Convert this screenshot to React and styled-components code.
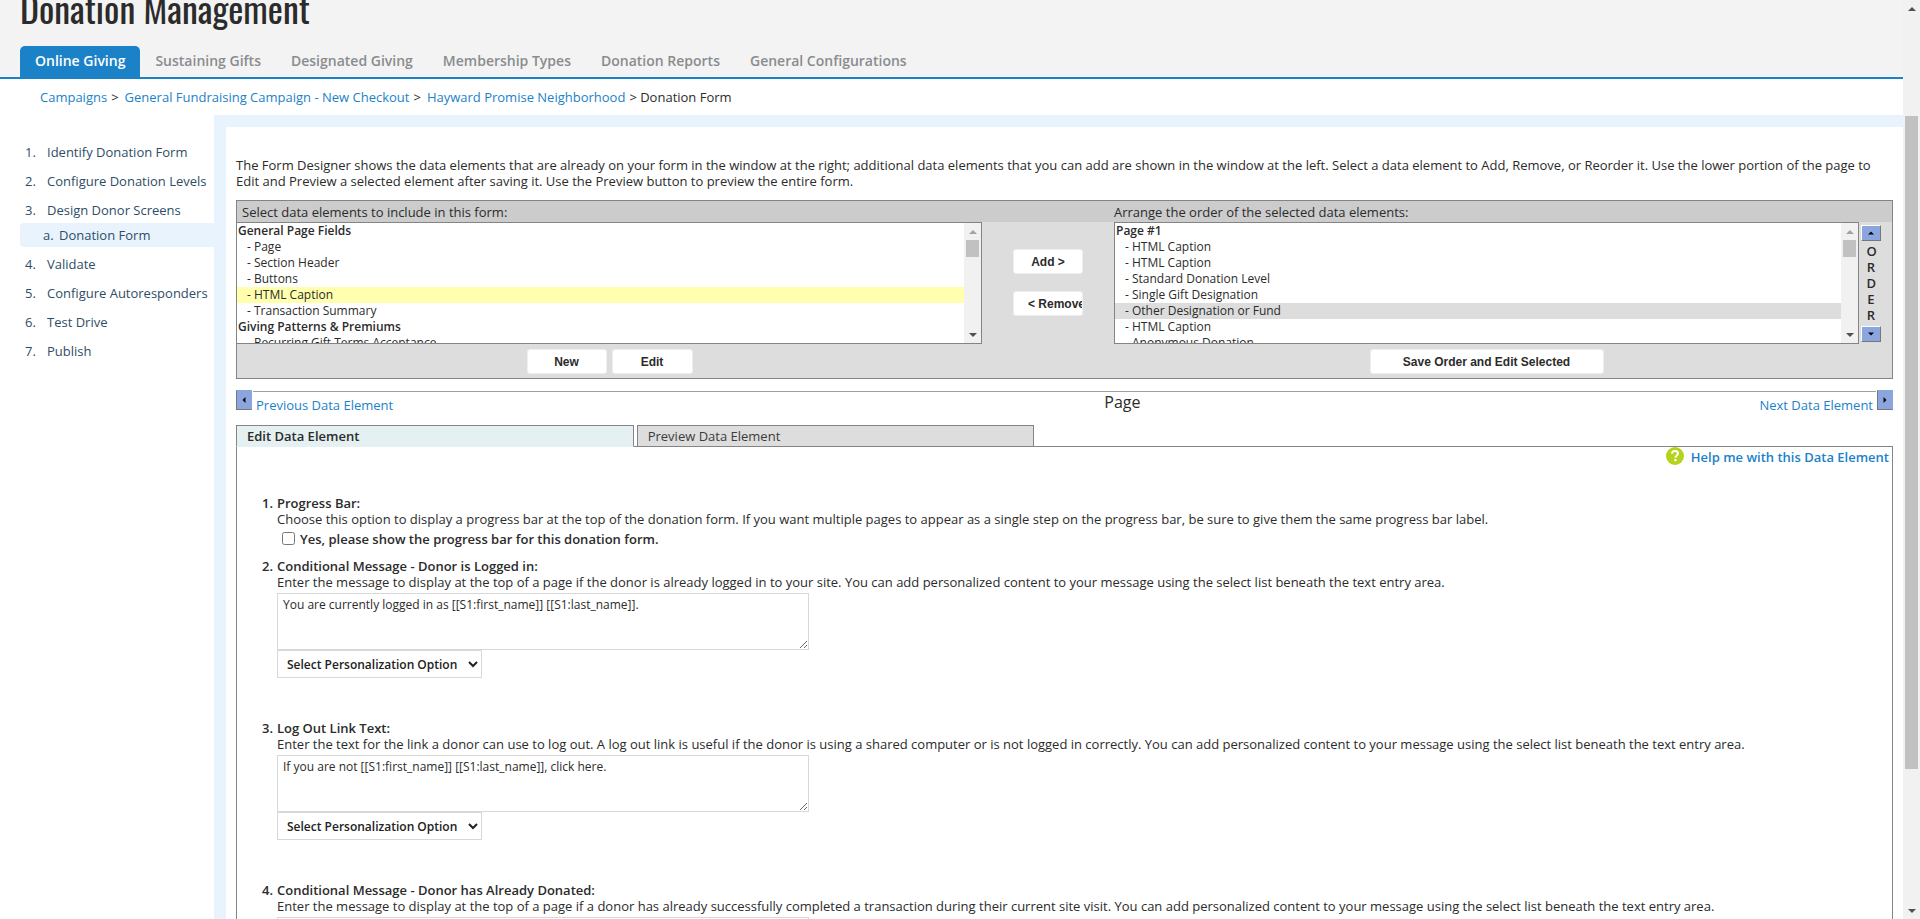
import React, { useState } from "react";
import styled, { createGlobalStyle, css } from "styled-components";

const blue = "#1c82c8";
const paleBlue = "#e8f3fd";
const ink = "#2b2b2b";
const line = "#848484";
const sans = `"Open Sans", "Noto Sans", sans-serif`;
const arial = `"Liberation Sans", Arial, sans-serif`;

const GlobalStyle = createGlobalStyle`
  * {
    box-sizing: border-box;
  }
  body {
    margin: 0;
    background: white;
    color: ${ink};
    font-family: ${sans};
    font-size: 13px;
    line-height: 16px;
  }
  a {
    color: ${blue};
    text-decoration: none;
  }
  ul, ol {
    list-style: none;
    margin: 0;
    padding: 0;
  }
`;

const Shell = styled.div`
  display: flex;
  height: 100vh;
  overflow: hidden;
`;

const Page = styled.div`
  flex: 1;
  min-width: 0;
  overflow: hidden;
`;

const Header = styled.header`
  background: #f3f3f3;
  border-bottom: 2px solid ${blue};
  padding: 0 20px;
`;

const PageTitle = styled.h1`
  margin: 0;
  padding-bottom: 30px;
  font-family: "Oswald", "Liberation Sans Narrow", ${arial};
  font-size: 36px;
  font-weight: 400;
  line-height: 16px;
`;

const MainTabs = styled.nav`
  display: flex;
`;

const MainTab = styled.a`
  padding: 0 15px 2px;
  border-radius: 5px 5px 0 0;
  font-size: 14px;
  font-weight: 600;
  line-height: 29px;
  color: #8a8c8e;
  ${({ $active }) =>
    $active &&
    css`
      background: ${blue};
      color: white;
    `}
`;

const Breadcrumb = styled.nav`
  display: flex;
  gap: 4px;
  padding: 10px 40px;

  a:not(:first-child) {
    margin-left: 2px;
  }
`;

const Columns = styled.div`
  display: flex;
  align-items: stretch;
`;

const Sidebar = styled.aside`
  flex: 0 0 214px;
  padding: 22px 0 0 20px;
`;

const Step = styled.a`
  display: flex;
  height: 29px;
  padding-left: 5px;
  align-items: center;
  color: #2f4d66;
  white-space: nowrap;

  span {
    width: 22px;
  }
  ${({ $sub }) =>
    $sub &&
    css`
      height: 24px;
      margin: -1px 0 2px;
      padding-left: 23px;
      border-radius: 4px 0 0 4px;
      background: ${paleBlue};
      span {
        width: 16px;
      }
    `}
`;

const Content = styled.main`
  flex: 1;
  min-width: 0;
  border: solid ${paleBlue};
  border-width: 12px 0 0 12px;
  padding: 30px 10px 0;
`;

const Intro = styled.p`
  margin: 0 0 11px;
`;

const Designer = styled.section`
  border: 1px solid ${line};
  background: #ddd;
`;

const DesignerGrid = styled.div`
  display: grid;
  grid-template-columns: 1fr 132px 1fr 33px;
`;

const DesignerHead = styled(DesignerGrid)`
  height: 21px;
  background: #ccc;
  line-height: 22px;
`;

const HeadLabel = styled.div`
  padding-left: ${({ $indent }) => ($indent ? "5px" : 0)};
`;

const ListFrame = styled.div`
  display: flex;
  height: 122px;
  border: 1px solid ${line};
  border-left-width: ${({ $flush }) => ($flush ? 0 : "1px")};
  background: white;
  overflow: hidden;
`;

const List = styled.ul`
  flex: 1;
  font-size: 12px;
`;

const ListItem = styled.li`
  padding-left: ${({ $group }) => ($group ? "1px" : "10px")};
  font-weight: ${({ $group }) => ($group ? 600 : 400)};
  background: ${({ $mark }) => $mark || "none"};
  cursor: pointer;
`;

const Track = styled.div`
  display: flex;
  flex-direction: column;
  flex: 0 0 17px;
  align-items: center;
  background: #f1f1f1;
`;

const TrackGap = styled.div`
  flex: ${({ $grow }) => $grow};
`;

const Thumb = styled.div`
  width: 13px;
  flex: ${({ $grow }) => $grow || "0 0 17px"};
  background: #c1c1c1;
`;

const Middle = styled.div`
  display: flex;
  flex-direction: column;
  align-items: center;
  gap: 17px;
  padding-top: 27px;
`;

const PushButton = styled.button`
  width: ${({ $width }) => $width};
  height: 25px;
  padding: 0 14px;
  border: 1px solid #eee;
  border-radius: 3px;
  background: white;
  color: ${ink};
  font: bold 12px ${arial};
  white-space: nowrap;
  overflow: hidden;
  cursor: pointer;
`;

const OrderColumn = styled.div`
  display: flex;
  flex-direction: column;
  align-items: center;
  width: 24px;
  padding: 3px 0 2px;
  font-weight: 600;
  text-align: center;

  span {
    margin: 2px 0 3px;
    width: 9px;
    word-break: break-all;
  }
`;

const ArrowButton = styled.button`
  display: flex;
  align-items: center;
  justify-content: center;
  flex: none;
  width: ${({ $tall }) => ($tall ? "16px" : "20px")};
  height: ${({ $tall }) => ($tall ? "20px" : "16px")};
  padding: 0;
  border: 1px solid;
  border-color: #fff #777 #777 #fff;
  background: #8ba6df;
  cursor: pointer;
  ${({ $tall }) =>
    $tall &&
    css`
      border-color: #8ba6df #8ba6df #777 #777;
    `}
`;

const DesignerFoot = styled(DesignerGrid)`
  padding: 5px 0 4px;
`;

const FootButtons = styled.div`
  display: flex;
  justify-content: center;
  gap: 5px;
`;

const Pager = styled.div`
  display: grid;
  grid-template-columns: 15fr auto 13fr;
  margin-top: 11px;
  height: 35px;
`;

const PagerSide = styled.div`
  display: flex;
  justify-content: ${({ $end }) => ($end ? "flex-end" : "flex-start")};
  gap: 4px;

  a {
    flex: 1;
    margin-top: 1px;
    padding-top: 5px;
    border-top: 1px solid #a0a0a0;
    text-align: ${({ $end }) => ($end ? "right" : "left")};
  }
  a:last-child {
    margin-left: -3px;
    padding-left: 3px;
  }
  a:first-child {
    margin-right: -3px;
    padding-right: 3px;
  }
`;

const PagerTitle = styled.h2`
  margin: 1px 0 0;
  border-top: 1px solid #a0a0a0;
  font-size: 16px;
  font-weight: 500;
  line-height: 20px;
`;

const ElementTabs = styled.div`
  display: flex;
  gap: 3px;
`;

const ElementTab = styled.button`
  flex: 0 0 24%;
  height: 22px;
  margin-bottom: -1px;
  padding: 0 10px;
  border: 1px solid ${line};
  background: #ddd;
  color: #3c3c3c;
  font: 400 13px ${sans};
  text-align: left;
  ${({ $active }) =>
    $active &&
    css`
      border-bottom-color: #e4f0f1;
      background: #e4f0f1;
      color: ${ink};
      font-weight: 600;
    `}
`;

const Panel = styled.section`
  border: 1px solid ${line};
  min-height: 500px;
`;

const HelpLink = styled.a`
  display: flex;
  justify-content: flex-end;
  gap: 7px;
  padding: 0 3px;
  font-weight: 600;
  line-height: 20px;
`;

const Fields = styled.ol`
  padding: 28px 40px 0 25px;
`;

const Field = styled.li`
  display: flex;
  margin-bottom: ${({ $tight }) => ($tight ? "11px" : "42px")};
`;

const FieldNumber = styled.span`
  width: 15px;
  font-weight: 600;
`;

const FieldBody = styled.div`
  flex: 1;
`;

const FieldTitle = styled.label`
  display: block;
  font-weight: 600;
`;

const CheckRow = styled.label`
  display: flex;
  align-items: center;
  gap: 5px;
  height: 20px;
  padding: 3px 0 0 5px;
  font-weight: 600;

  input {
    width: 13px;
    height: 13px;
    margin: 0;
  }
`;

const MessageBox = styled.textarea`
  display: block;
  width: 532px;
  height: 57px;
  margin-top: 3px;
  padding: 3px 5px;
  border: 1px solid #d8d8d8;
  color: ${ink};
  font: 12px/16px ${sans};
`;

const Personalize = styled.select`
  display: block;
  width: 205px;
  height: 28px;
  padding: 0 4px 0 5px;
  border: 1px solid #d8d8d8;
  background: white;
  color: #222;
  font: 600 12px ${sans};
`;

const Triangle = ({ dir, color = "#505050", size = 8 }) => {
  const points = {
    up: "0,6 4,2 8,6",
    down: "0,2 4,6 8,2",
    left: "6,0 2,4 6,8",
    right: "2,0 6,4 2,8"
  }[dir];
  return (
    <svg width={size} height={size} viewBox="0 0 8 8" aria-hidden="true">
      <polygon points={points} fill={color} />
    </svg>
  );
};

const TrackEnd = styled.div`
  display: flex;
  align-items: center;
  justify-content: center;
  height: 17px;
`;

const ListTrack = () => (
  <Track>
    <TrackEnd>
      <Triangle dir="up" color="#a3a3a3" />
    </TrackEnd>
    <Thumb />
    <TrackGap $grow={1} />
    <TrackEnd>
      <Triangle dir="down" />
    </TrackEnd>
  </Track>
);

const HelpIcon = () => (
  <svg width="18" height="18" viewBox="0 0 18 18" aria-hidden="true">
    <circle cx="9" cy="9" r="9" fill="#b5d31b" />
    <path
      d="M6 6.8C6 4.9 7.3 4 9 4s3 .9 3 2.5c0 2-2.6 2-2.6 4.2"
      fill="none"
      stroke="white"
      strokeWidth="2"
    />
    <rect x="8.3" y="12" width="2.2" height="2.2" fill="white" />
  </svg>
);

const mainTabs = [
  "Online Giving",
  "Sustaining Gifts",
  "Designated Giving",
  "Membership Types",
  "Donation Reports",
  "General Configurations"
];

const steps = [
  { no: "1.", label: "Identify Donation Form" },
  { no: "2.", label: "Configure Donation Levels" },
  { no: "3.", label: "Design Donor Screens" },
  { no: "a.", label: "Donation Form", sub: true },
  { no: "4.", label: "Validate" },
  { no: "5.", label: "Configure Autoresponders" },
  { no: "6.", label: "Test Drive" },
  { no: "7.", label: "Publish" }
];

const available = [
  { label: "General Page Fields", group: true },
  { label: "Page" },
  { label: "Section Header" },
  { label: "Buttons" },
  { label: "HTML Caption" },
  { label: "Transaction Summary" },
  { label: "Giving Patterns & Premiums", group: true },
  { label: "Recurring Gift Terms Acceptance" }
];

const selected = [
  { label: "Page #1", group: true },
  { label: "HTML Caption" },
  { label: "HTML Caption" },
  { label: "Standard Donation Level" },
  { label: "Single Gift Designation" },
  { label: "Other Designation or Fund" },
  { label: "HTML Caption" },
  { label: "Anonymous Donation" }
];

const messages = [
  {
    title: "Conditional Message - Donor is Logged in:",
    text:
      "Enter the message to display at the top of a page if the donor is already logged in to your site. You can add personalized content to your message using the select list beneath the text entry area.",
    value: "You are currently logged in as [[S1:first_name]] [[S1:last_name]]."
  },
  {
    title: "Log Out Link Text:",
    text:
      "Enter the text for the link a donor can use to log out. A log out link is useful if the donor is using a shared computer or is not logged in correctly. You can add personalized content to your message using the select list beneath the text entry area.",
    value: "If you are not [[S1:first_name]] [[S1:last_name]], click here."
  },
  {
    title: "Conditional Message - Donor has Already Donated:",
    text:
      "Enter the message to display at the top of a page if a donor has already successfully completed a transaction during their current site visit. You can add personalized content to your message using the select list beneath the text entry area.",
    value: ""
  }
];

const ElementList = ({ items, label, flush, active, onPick, mark }) => (
  <ListFrame $flush={flush}>
    <List role="listbox" aria-label={label}>
      {items.map((item, i) => (
        <ListItem
          key={i}
          role="option"
          aria-selected={i === active}
          $group={item.group}
          $mark={i === active && mark}
          onClick={() => !item.group && onPick(i)}
        >
          {item.group ? item.label : `- ${item.label}`}
        </ListItem>
      ))}
    </List>
    <ListTrack />
  </ListFrame>
);

const FormDesigner = () => {
  const [left, setLeft] = useState(4);
  const [right, setRight] = useState(5);
  return (
    <Designer>
      <DesignerHead>
        <HeadLabel $indent>Select data elements to include in this form:</HeadLabel>
        <div />
        <HeadLabel>Arrange the order of the selected data elements:</HeadLabel>
      </DesignerHead>
      <DesignerGrid>
        <ElementList
          flush
          items={available}
          label="Available data elements"
          active={left}
          onPick={setLeft}
          mark="#ffffae"
        />
        <Middle>
          <PushButton $width="70px">Add &gt;</PushButton>
          <PushButton $width="70px">&lt; Remove</PushButton>
        </Middle>
        <ElementList
          items={selected}
          label="Selected data elements"
          active={right}
          onPick={setRight}
          mark="#ddd"
        />
        <OrderColumn>
          <ArrowButton aria-label="Move up">
            <Triangle dir="up" color="black" size={6} />
          </ArrowButton>
          <span>ORDER</span>
          <ArrowButton aria-label="Move down">
            <Triangle dir="down" color="black" size={6} />
          </ArrowButton>
        </OrderColumn>
      </DesignerGrid>
      <DesignerFoot>
        <FootButtons>
          <PushButton $width="80px">New</PushButton>
          <PushButton $width="81px">Edit</PushButton>
        </FootButtons>
        <div />
        <FootButtons>
          <PushButton $width="234px">Save Order and Edit Selected</PushButton>
        </FootButtons>
      </DesignerFoot>
    </Designer>
  );
};

const MessageField = ({ no, title, text, value }) => (
  <Field>
    <FieldNumber>{no}.</FieldNumber>
    <FieldBody>
      <FieldTitle htmlFor={`message-${no}`}>{title}</FieldTitle>
      {text}
      <MessageBox id={`message-${no}`} defaultValue={value} />
      <Personalize aria-label={`Personalization for ${title}`}>
        <option>Select Personalization Option</option>
      </Personalize>
    </FieldBody>
  </Field>
);

const App = () => (
  <>
    <GlobalStyle />
    <Shell>
      <Page>
        <Header>
          <PageTitle>Donation Management</PageTitle>
          <MainTabs>
            {mainTabs.map((tab, i) => (
              <MainTab key={tab} href="#" $active={i === 0}>
                {tab}
              </MainTab>
            ))}
          </MainTabs>
        </Header>
        <Breadcrumb>
          <a href="#">Campaigns</a> &gt;
          <a href="#">General Fundraising Campaign - New Checkout</a> &gt;
          <a href="#">Hayward Promise Neighborhood</a> &gt; Donation Form
        </Breadcrumb>
        <Columns>
          <Sidebar>
            {steps.map(step => (
              <Step key={step.no} href="#" $sub={step.sub}>
                <span>{step.no}</span>
                {step.label}
              </Step>
            ))}
          </Sidebar>
          <Content>
            <Intro>
              The Form Designer shows the data elements that are already on your
              form in the window at the right; additional data elements that you
              can add are shown in the window at the left. Select a data element
              to Add, Remove, or Reorder it. Use the lower portion of the page
              to Edit and Preview a selected element after saving it. Use the
              Preview button to preview the entire form.
            </Intro>
            <FormDesigner />
            <Pager>
              <PagerSide>
                <ArrowButton $tall aria-label="Previous">
                  <Triangle dir="left" color="black" size={6} />
                </ArrowButton>
                <a href="#">Previous Data Element</a>
              </PagerSide>
              <PagerTitle>Page</PagerTitle>
              <PagerSide $end>
                <a href="#">Next Data Element</a>
                <ArrowButton $tall aria-label="Next">
                  <Triangle dir="right" color="black" size={6} />
                </ArrowButton>
              </PagerSide>
            </Pager>
            <ElementTabs>
              <ElementTab $active>Edit Data Element</ElementTab>
              <ElementTab>Preview Data Element</ElementTab>
            </ElementTabs>
            <Panel>
              <HelpLink href="#">
                <HelpIcon />
                Help me with this Data Element
              </HelpLink>
              <Fields>
                <Field $tight>
                  <FieldNumber>1.</FieldNumber>
                  <FieldBody>
                    <FieldTitle as="div">Progress Bar:</FieldTitle>
                    Choose this option to display a progress bar at the top of
                    the donation form. If you want multiple pages to appear as a
                    single step on the progress bar, be sure to give them the
                    same progress bar label.
                    <CheckRow>
                      <input type="checkbox" />
                      Yes, please show the progress bar for this donation form.
                    </CheckRow>
                  </FieldBody>
                </Field>
                {messages.map((message, i) => (
                  <MessageField key={message.title} no={i + 2} {...message} />
                ))}
              </Fields>
            </Panel>
          </Content>
        </Columns>
      </Page>
      <Track>
        <TrackEnd>
          <Triangle dir="up" />
        </TrackEnd>
        <TrackGap $grow={99} />
        <Thumb $grow={653} />
        <TrackGap $grow={133} />
        <TrackEnd>
          <Triangle dir="down" />
        </TrackEnd>
      </Track>
    </Shell>
  </>
);

export default App;
